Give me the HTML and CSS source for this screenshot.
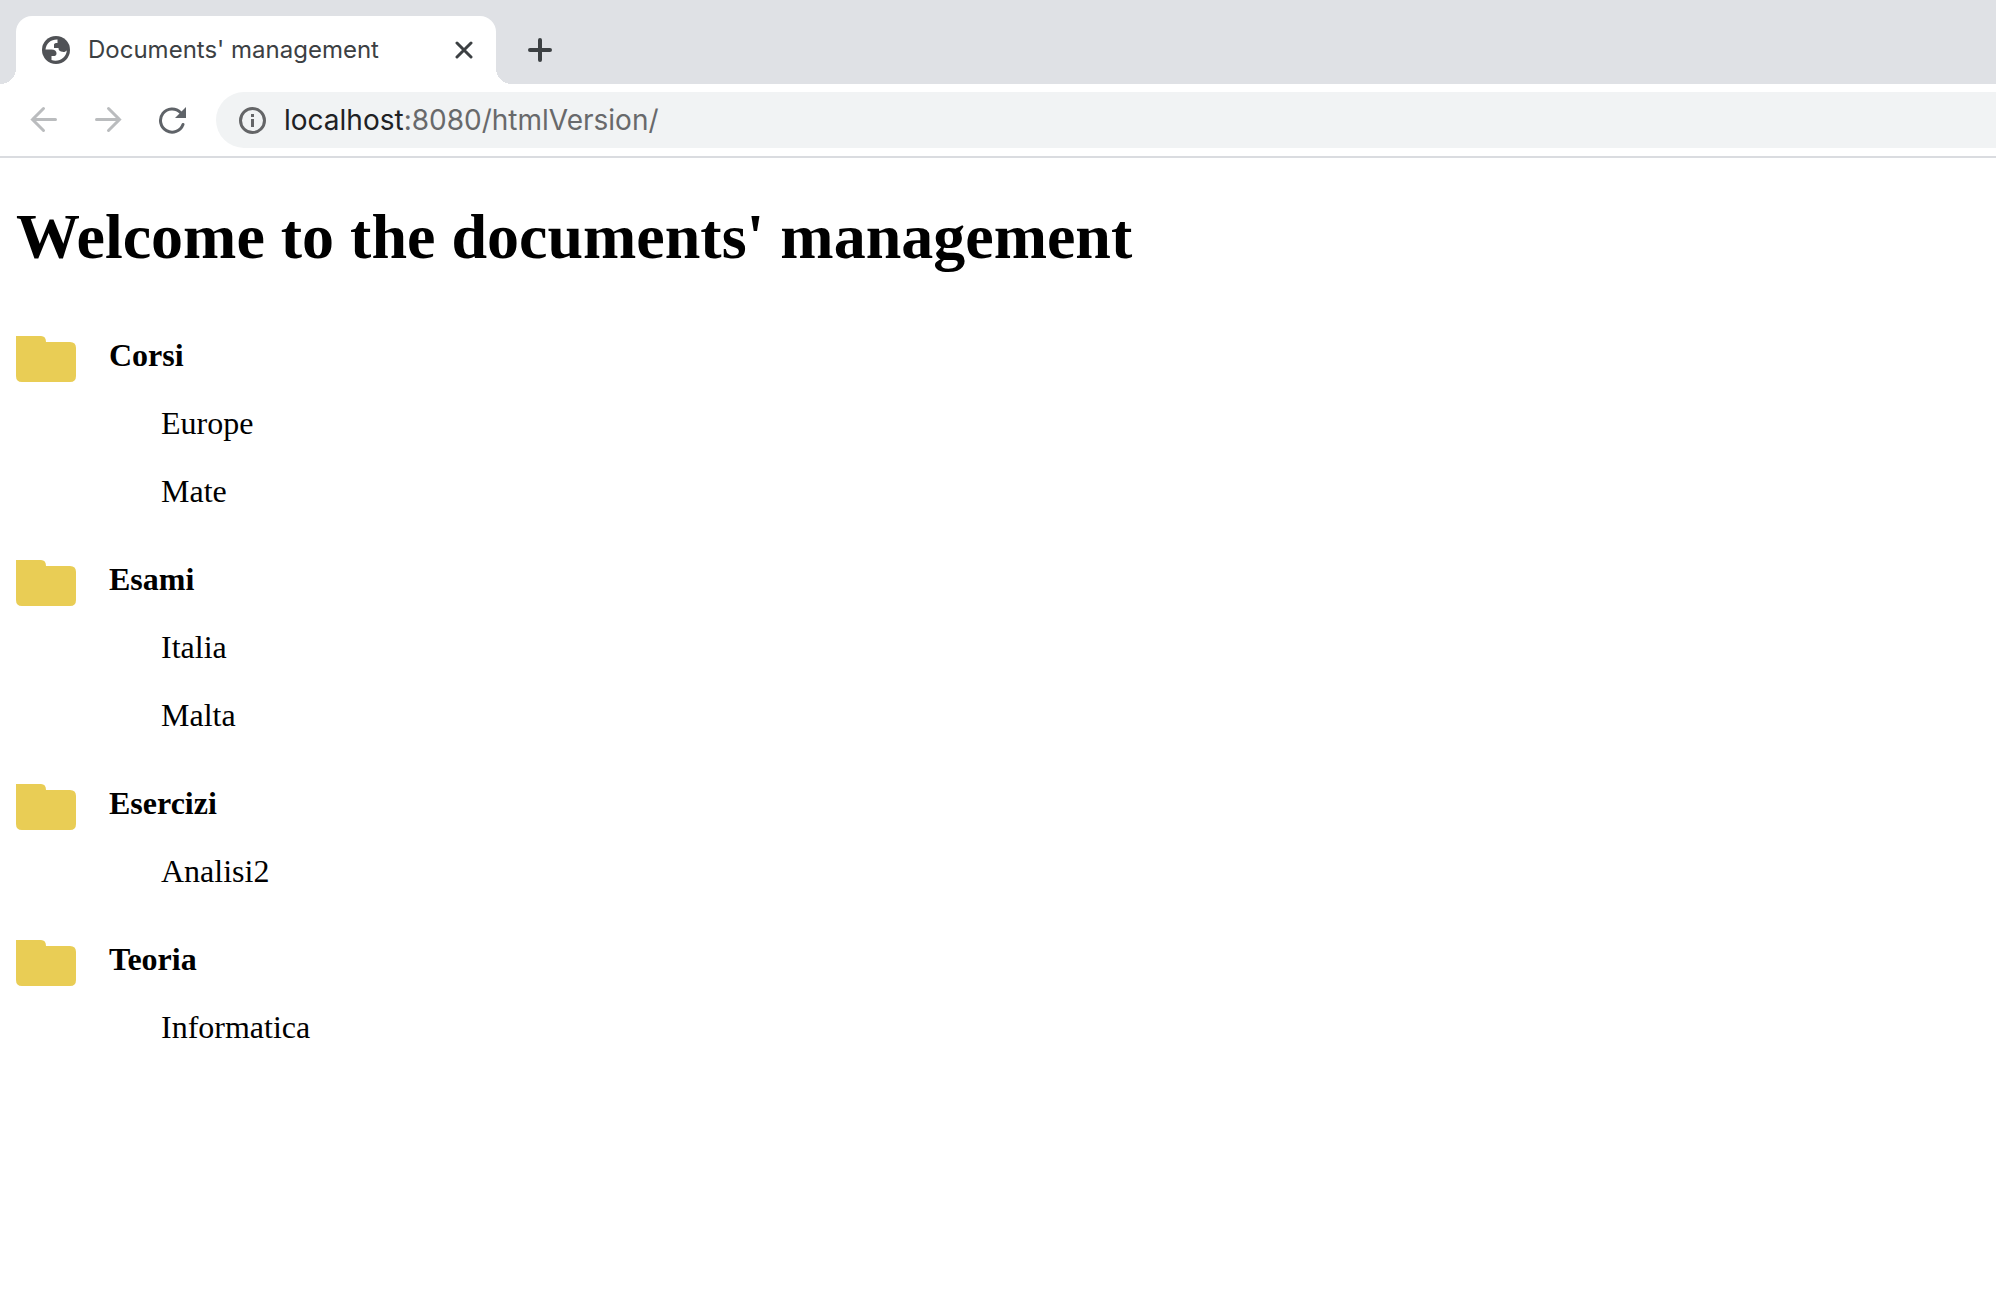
FILE: index.html
```html
<!DOCTYPE html>
<html lang="en">
<head>
<meta charset="utf-8">
<title>Documents' management</title>
<link rel="stylesheet" href="styles.css">
</head>
<body>
<header class="browser">
  <div class="tabstrip">
    <div class="tab">
      <svg class="favicon" viewBox="0 0 28 28" aria-hidden="true"><circle cx="14" cy="14" r="14" fill="#505256"/><path d="M15.5 3.500C9 3.300 4 7.500 3.500 13.500H9.500C12.500 13.500 14.500 15 14.500 17.200C14.500 19 13.500 20 12.500 20H9.500V24C17 26.500 24.500 21.500 24.800 14.200C23.800 15.800 22 16.200 20 15.800C17.500 15.500 16.500 14 16.500 12H12V8.800C12 7.500 13 7 15.500 7Z" fill="#fff"/></svg>
      <span class="tab-title">Documents' management</span>
      <button class="icon-button tab-close" aria-label="Close tab"><svg width="18" height="18" viewBox="0 0 18 18"><path d="M2 2L16 16M16 2L2 16" stroke="#3c4043" stroke-width="3" stroke-linecap="round"/></svg></button>
    </div>
    <button class="icon-button new-tab" aria-label="New tab"><svg width="24" height="24" viewBox="0 0 24 24"><path d="M12 2V22M2 12H22" stroke="#3c4043" stroke-width="4" stroke-linecap="round"/></svg></button>
  </div>
  <nav class="toolbar">
    <button class="icon-button" aria-label="Back"><svg width="28" height="28" viewBox="0 0 28 28"><path d="M25.500 13.500H2.500M13.500 2.500L2.500 13.500L13.500 24.500" fill="none" stroke="#babcbe" stroke-width="3" stroke-linecap="round"/></svg></button>
    <button class="icon-button" aria-label="Forward"><svg width="28" height="28" viewBox="0 0 28 28"><path d="M2.500 13.500H25.500M14.500 2.500L25.500 13.500L14.500 24.500" fill="none" stroke="#babcbe" stroke-width="3" stroke-linecap="round"/></svg></button>
    <button class="icon-button" aria-label="Reload"><svg width="28" height="28" viewBox="0 0 28 28"><path d="M22.500 6.500A11.600 11.600 0 1 0 25 18.500" fill="none" stroke="#5f6368" stroke-width="3" stroke-linecap="round"/><path d="M28 1V12H17Z" fill="#5f6368"/></svg></button>
    <div class="omnibox">
      <svg width="28" height="28" viewBox="0 0 28 28" aria-hidden="true"><circle cx="14.500" cy="14.500" r="12" fill="none" stroke="#646567" stroke-width="3"/><path d="M13 8H16V11H13ZM13 13H16V21H13Z" fill="#646567"/></svg>
      <span class="url"><span class="host">localhost</span>:8080/htmlVersion/</span>
    </div>
  </nav>
</header>
<main class="page">
  <h1>Welcome to the documents' management</h1>
  <section class="folder">
    <svg class="folder-icon" viewBox="0 0 60 46" aria-hidden="true"><path d="M0 0H25Q30 0 30 6H54Q60 6 60 12V40Q60 46 54 46H6Q0 46 0 40Z" fill="#e9cd55"/></svg>
    <h2>Corsi</h2>
    <ul><li>Europe</li><li>Mate</li></ul>
  </section>
  <section class="folder">
    <svg class="folder-icon" viewBox="0 0 60 46" aria-hidden="true"><path d="M0 0H25Q30 0 30 6H54Q60 6 60 12V40Q60 46 54 46H6Q0 46 0 40Z" fill="#e9cd55"/></svg>
    <h2>Esami</h2>
    <ul><li>Italia</li><li>Malta</li></ul>
  </section>
  <section class="folder">
    <svg class="folder-icon" viewBox="0 0 60 46" aria-hidden="true"><path d="M0 0H25Q30 0 30 6H54Q60 6 60 12V40Q60 46 54 46H6Q0 46 0 40Z" fill="#e9cd55"/></svg>
    <h2>Esercizi</h2>
    <ul><li>Analisi2</li></ul>
  </section>
  <section class="folder">
    <svg class="folder-icon" viewBox="0 0 60 46" aria-hidden="true"><path d="M0 0H25Q30 0 30 6H54Q60 6 60 12V40Q60 46 54 46H6Q0 46 0 40Z" fill="#e9cd55"/></svg>
    <h2>Teoria</h2>
    <ul><li>Informatica</li></ul>
  </section>
</main>
</body>
</html>
```
FILE: styles.css
```css
* { box-sizing: border-box; }
body { margin: 0; background: #fff; color: #000; font-family: "Liberation Serif", serif; }
svg { display: block; flex: none; }

.browser { font-family: Inter, sans-serif; border-bottom: 2px solid #dadce0; }
.tabstrip { display: flex; align-items: flex-end; height: 84px; padding-left: 16px; background: #dfe1e5; }
.tab { position: relative; display: flex; align-items: center; width: 480px; height: 68px; padding: 0 20px 0 26px; background: #fff; border-radius: 16px 16px 0 0; }
/* Flared corners where the tab meets the toolbar */
.tab::before, .tab::after { content: ""; position: absolute; bottom: 0; width: 16px; height: 16px; }
.tab::before { right: 100%; background: radial-gradient(circle at 0 0, #dfe1e5 16px, #fff 16px); }
.tab::after { left: 100%; background: radial-gradient(circle at 100% 0, #dfe1e5 16px, #fff 16px); }
.favicon { width: 28px; height: 28px; }
.tab-title { flex: 1; margin-left: 18px; font-size: 24px; line-height: 32px; color: #3c4043; white-space: nowrap; }
.icon-button { display: flex; flex: none; padding: 0; border: 0; background: none; }
.tab-close { padding: 3px; }
.new-tab { height: 68px; align-items: center; margin-left: 32px; }
.toolbar { display: flex; align-items: center; gap: 36px; height: 72px; padding-left: 30px; }
.omnibox { display: flex; flex: 1; align-items: center; gap: 18px; height: 56px; margin-left: -6px; padding-left: 22px; border-radius: 28px 0 0 28px; background: #f1f3f4; }
.url { font-size: 28px; line-height: 36px; color: #68696b; }
.host { color: #202124; }

.page { padding: 42px 16px; }
h1 { margin: 0 0 62px; font-size: 64px; line-height: 74px; }
.folder { display: grid; grid-template-columns: 60px 1fr; column-gap: 33px; margin-bottom: 51px; }
.folder-icon { grid-row: 1; width: 60px; height: 46px; }
h2 { margin: 0; padding-top: 1px; font-size: 32px; line-height: 36px; }
ul { grid-column: 1 / -1; display: grid; gap: 32px; margin: 23px 0 0; padding: 0 0 0 145px; list-style: none; }
li { font-size: 32px; line-height: 36px; }
```
